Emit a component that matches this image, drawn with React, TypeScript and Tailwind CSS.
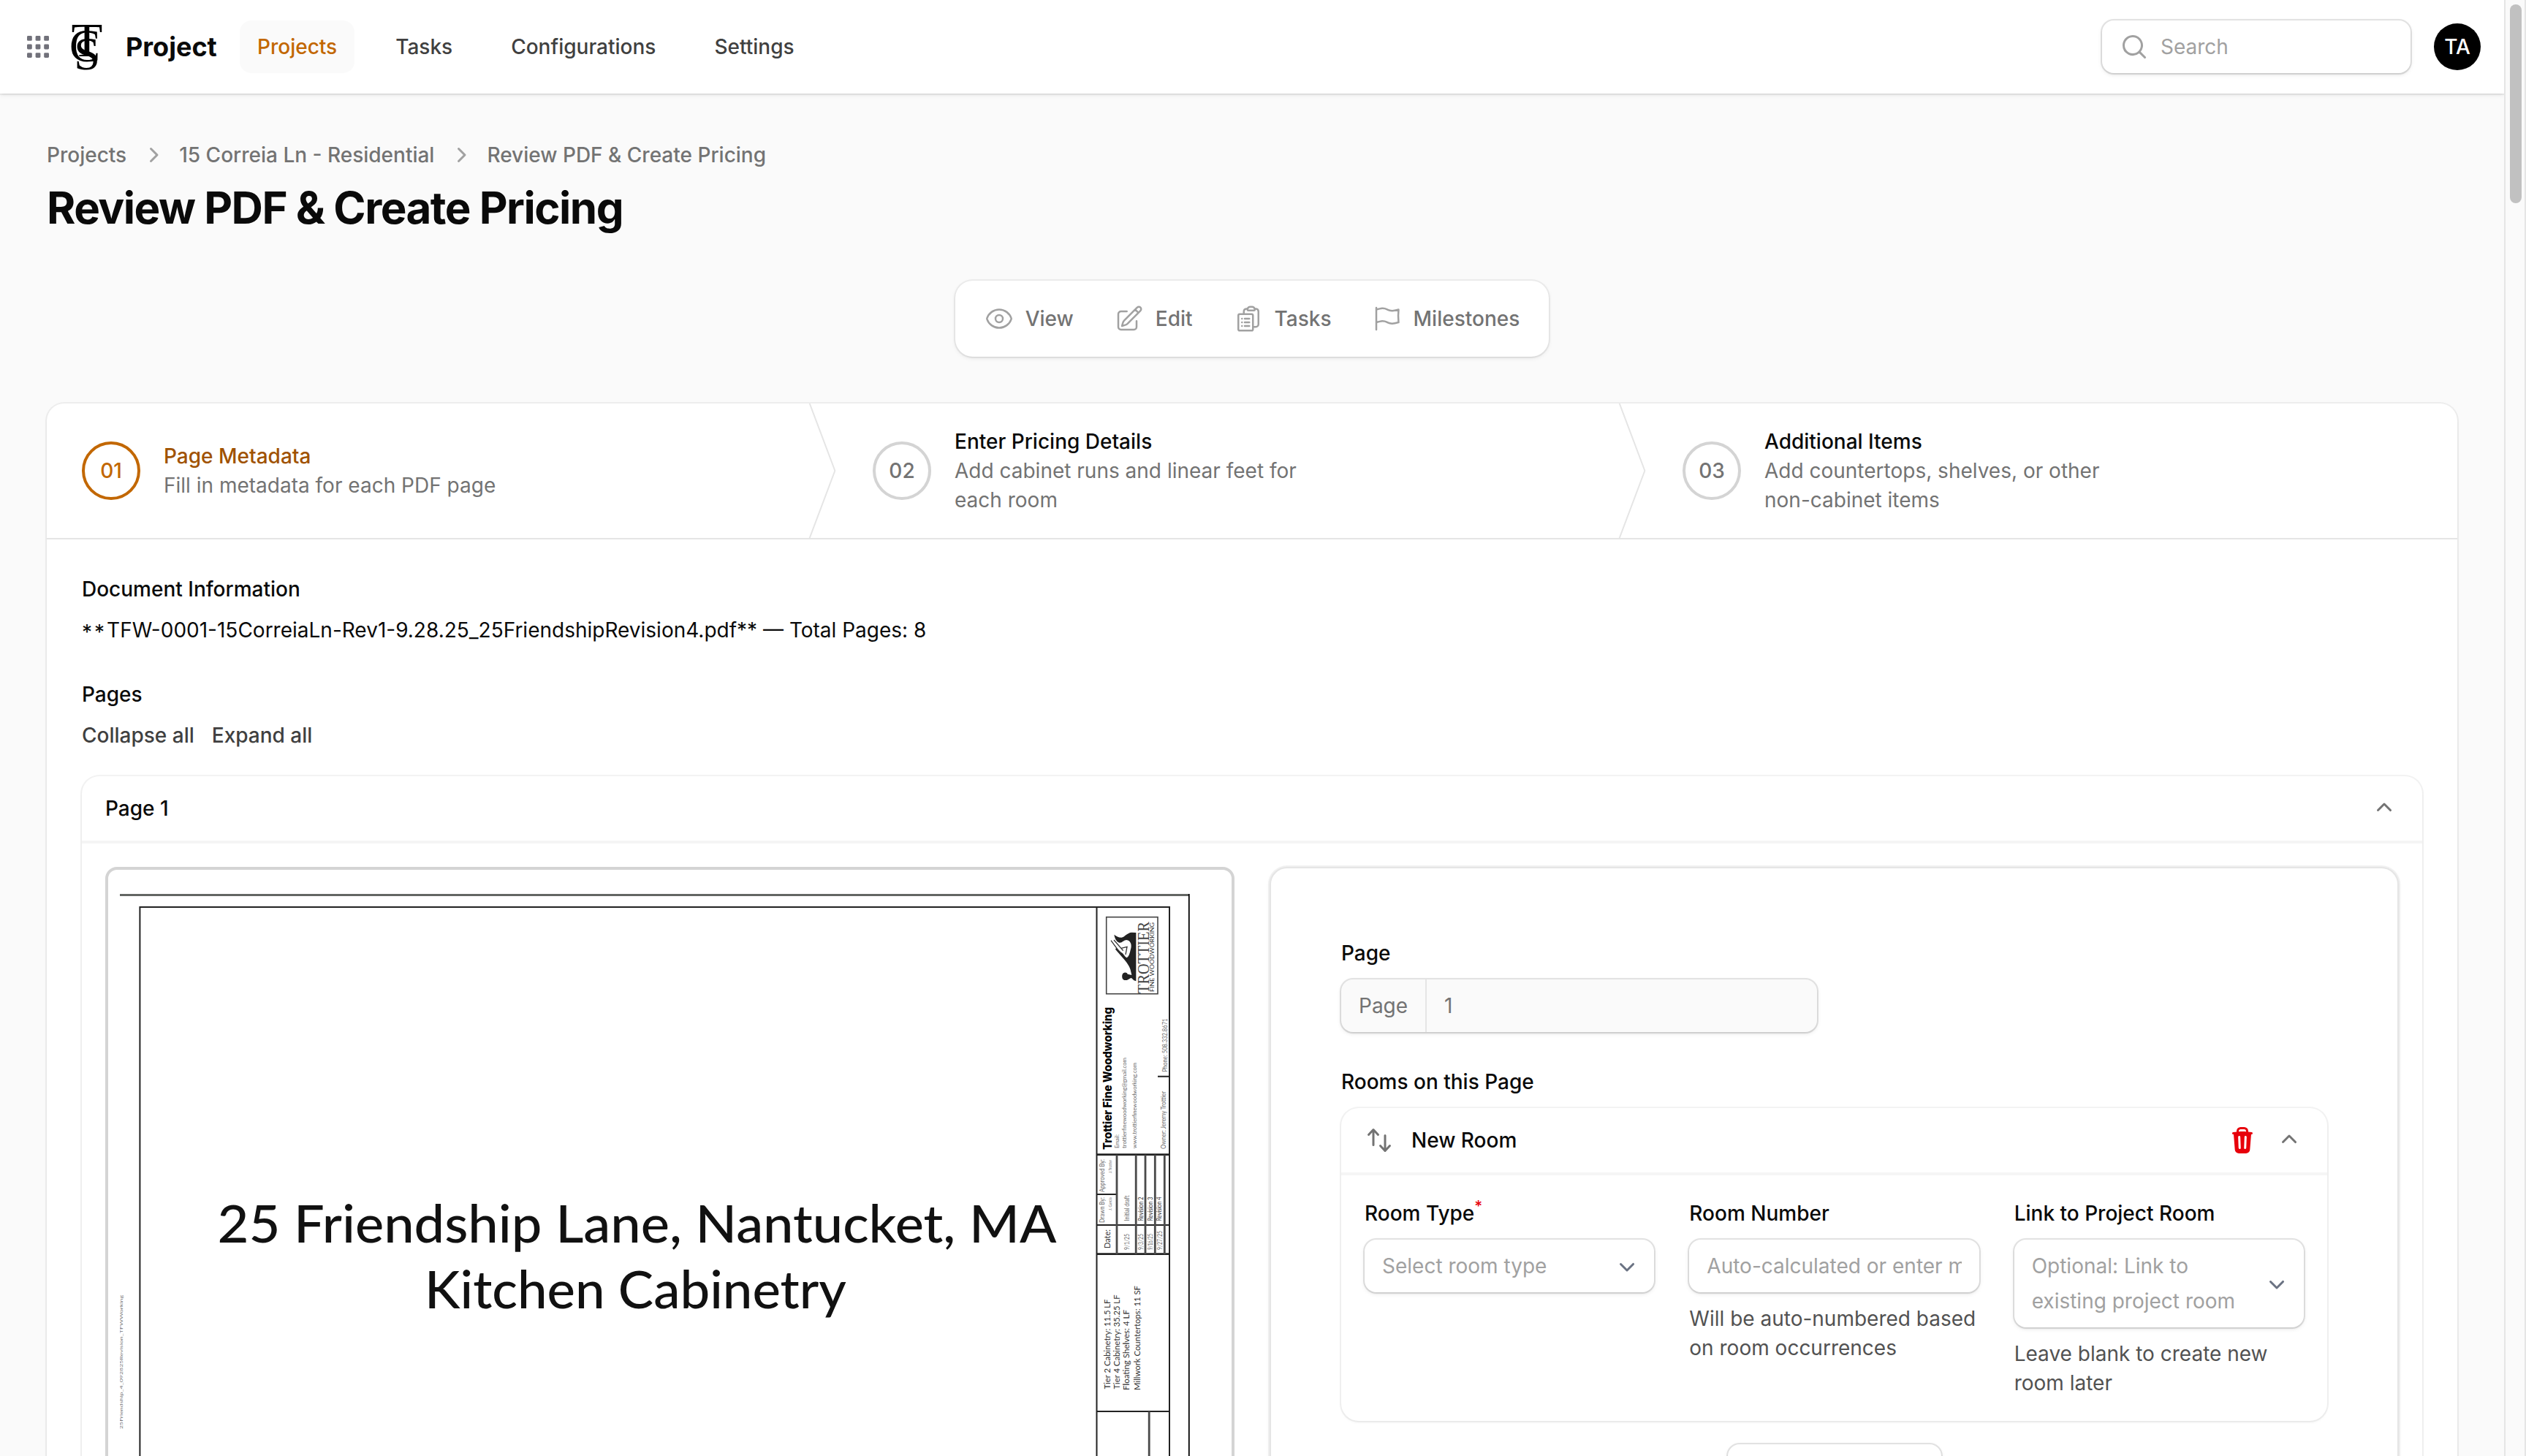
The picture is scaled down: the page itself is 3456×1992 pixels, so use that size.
import React from "react";
import {
  HiMiniArrowsUpDown,
  HiMiniChevronDown,
  HiMiniChevronRight,
  HiMiniChevronUp,
  HiMiniMagnifyingGlass,
  HiMiniTrash,
  HiOutlineClipboardDocumentList,
  HiOutlineEye,
  HiOutlineFlag,
  HiOutlinePencilSquare,
} from "react-icons/hi2";

const SURFACE =
  "shadow-[0_0_0_2px_rgba(10,10,10,0.05),0_2px_6px_rgba(0,0,0,0.08),0_2px_4px_-2px_rgba(0,0,0,0.08)]";
const CARD = "shadow-[0_0_0_2px_rgba(10,10,10,0.05),0_2px_4px_rgba(0,0,0,0.05)]";
const FIELD =
  "rounded-[16px] shadow-[0_0_0_2px_rgba(10,10,10,0.1),0_2px_6px_rgba(0,0,0,0.1),0_2px_4px_-2px_rgba(0,0,0,0.1)]";

function Monogram() {
  return (
    <svg width="48" height="64" viewBox="0 0 48 64" className="ml-[26px] overflow-visible">
      <g fontFamily="Liberation Serif, serif" fill="#000" textAnchor="middle">
        <text transform="translate(25 44.6) scale(1.08 1)" fontSize="65">T</text>
        <text x="22" y="52" fontSize="63">C</text>
        <text x="25" y="63" fontSize="64">S</text>
      </g>
    </svg>
  );
}

function Header() {
  const items = ["Projects", "Tasks", "Configurations", "Settings"];
  return (
    <header className={`relative flex h-32 items-center bg-white pr-8 pl-9 ${SURFACE}`}>
      <svg width="32" height="32" viewBox="0 0 32 32" fill="#71717a">
        {[1, 12.6, 24.2].map((y) =>
          [1, 12.6, 24.2].map((x) => (
            <rect key={`${x}-${y}`} x={x} y={y} width="6.8" height="6.8" rx="1.4" />
          ))
        )}
      </svg>
      <Monogram />
      <span className="ml-[30px] w-[125px] text-[36px] leading-10 font-bold whitespace-nowrap text-neutral-950">
        Project
      </span>
      <nav className="ml-[31px] flex items-center gap-8">
        {items.map((t, i) => (
          <span
            key={t}
            className={
              i === 0
                ? "rounded-[16px] bg-neutral-50 px-6 py-4 text-[#c26700]"
                : "px-6 py-4 text-neutral-700"
            }
          >
            {t}
          </span>
        ))}
      </nav>
      <div className={`ml-auto flex h-[72px] w-[422px] items-center bg-white pl-6 ${FIELD}`}>
        <HiMiniMagnifyingGlass className="size-10 text-neutral-400" />
        <span className="ml-4 font-normal text-neutral-400">Search</span>
      </div>
      <span className="ml-8 flex size-16 items-center justify-center rounded-full bg-black text-white">TA</span>
    </header>
  );
}

const TABS = [
  { icon: HiOutlineEye, label: "View" },
  { icon: HiOutlinePencilSquare, label: "Edit" },
  { icon: HiOutlineClipboardDocumentList, label: "Tasks" },
  { icon: HiOutlineFlag, label: "Milestones" },
];

function StepDivider() {
  return (
    <svg
      className="absolute top-0 right-0 h-full w-10 text-neutral-200"
      viewBox="0 0 22 80"
      preserveAspectRatio="none"
      fill="none"
    >
      <path d="M0 -2L20 40L0 82" stroke="currentColor" strokeWidth="2" strokeLinejoin="round" vectorEffect="non-scaling-stroke" />
    </svg>
  );
}

const STEPS = [
  { title: "Page Metadata", text: "Fill in metadata for each PDF page" },
  { title: "Enter Pricing Details", text: "Add cabinet runs and linear feet for each room" },
  { title: "Additional Items", text: "Add countertops, shelves, or other non-cabinet items" },
];

function Stepper() {
  return (
    <div className="grid grid-cols-[1082px_1108px_1108px] border-b-2 border-neutral-200">
      {STEPS.map((s, i) => (
        <div key={s.title} className="relative flex h-[184px] items-center gap-8 px-12">
          <span
            className={
              i === 0
                ? "flex size-20 items-center justify-center rounded-full border-4 border-[#c26700] text-[#c26700]"
                : "flex size-20 items-center justify-center rounded-full border-4 border-neutral-300 text-neutral-500"
            }
          >
            {`0${i + 1}`}
          </span>
          <div className="w-[480px]">
            <div className={i === 0 ? "text-[#a05200]" : "text-neutral-950"}>{s.title}</div>
            <div className="font-normal text-neutral-500">{s.text}</div>
          </div>
          {i < 2 && <StepDivider />}
        </div>
      ))}
    </div>
  );
}

type NoteProps = {
  x: number;
  y: number;
  len: number;
  size: number;
  fill?: string;
  font?: string;
  weight?: number;
  children: string;
};

/* A line of title block lettering that reads from bottom to top. */
function Note({ x, y, len, size, fill = "#6b6b6b", font = "Lato, sans-serif", weight = 400, children }: NoteProps) {
  return (
    <text
      transform={`translate(${x} ${y}) rotate(-90)`}
      fontSize={size}
      fontFamily={font}
      fontWeight={weight}
      fill={fill}
      textLength={len}
      lengthAdjust="spacingAndGlyphs"
    >
      {children}
    </text>
  );
}

function Drawing() {
  return (
    <svg width="1509" height="798" viewBox="164 1194 1509 798" className="block">
      <g fill="none" stroke="#222" strokeWidth="2">
        <path d="M164 1224.4H1627" stroke="#636663" strokeWidth="3" />
        <path d="M1626.8 1223V2000" strokeWidth="1.8" stroke="#000" />
        <path d="M191.4 2000V1241H1600V2000M1500.5 1241V2000" />
        <path d="M1500 1579.6H1600M1500 1715.6H1600" strokeWidth="2.8" />
        <path d="M1500 1634H1528M1500 1676H1600M1500 1931H1600M1584 1472.8H1600" />
        <path d="M1528 1580V1716M1554.2 1580V1716M1567 1580V1716M1580.3 1580V1716M1593.3 1580V1716M1572.2 1931V2000" stroke="#4a4a4a" strokeWidth="2.8" />
        <rect x="1513.7" y="1254.7" width="70.3" height="105" stroke="#444" strokeWidth="1.6" />
      </g>

      <g transform="translate(1440 1180) scale(0.33333)">
        <path
          fill="#222"
          d="M343 288L325 287C306 288 297 306 283 308C270 308 262 302 253 296C256 312 262 325 274 329C286 331 292 318 304 318C320 320 326 336 322 352C318 366 316 386 304 391C296 386 290 372 282 369L262 350L258 356L282 384C298 402 314 420 320 440L325 462L308 458C306 450 290 448 286 462C284 476 290 484 300 483C312 484 316 474 324 474L334 484L343 487Z"
        />
        <path d="M240 320L280 374M252 318L290 362M282 352L306 346L300 378" fill="none" stroke="#333" strokeWidth="4" />
      </g>

      <g>
        <text x="297.5" y="1699.5" fontSize="71" fontFamily="Lato, sans-serif" fill="#111" textLength="1148" lengthAdjust="spacingAndGlyphs">
          25 Friendship Lane, Nantucket, MA
        </text>
        <text x="581" y="1790" fontSize="71" fontFamily="Lato, sans-serif" fill="#111" textLength="577" lengthAdjust="spacingAndGlyphs">
          Kitchen Cabinetry
        </text>
      </g>

      <Note x={1572} y={1359} len={98} size={23} fill="#444" font="Liberation Serif, serif">TROTTIER</Note>
      <Note x={1578.5} y={1357} len={95} size={7.5} fill="#333">FINE WOODWORKING</Note>
      <Note x={1520.6} y={1573} len={195} size={16} fill="#000" font="Inter, sans-serif" weight={800}>Trottier Fine Woodworking</Note>
      <Note x={1531} y={1571} len={19} size={8}>Email:</Note>
      <Note x={1541} y={1571} len={124} size={8}>trottierfinewoodworking@gmail.com</Note>
      <Note x={1554.5} y={1571} len={117} size={8}>www.trottierfinewoodworking.com</Note>
      <Note x={1595} y={1572} len={79} size={8.5}>Owner: Jeremy Trottier</Note>
      <Note x={1597} y={1466.5} len={73} size={8.5}>Phone: 508.332.8671</Note>

      <Note x={1511} y={1631} len={45} size={8.5}>Approved By:</Note>
      <Note x={1520.5} y={1605} len={18} size={5}>J. Trottier</Note>
      <Note x={1511} y={1673} len={35} size={8.5}>Drawn By:</Note>
      <Note x={1520.5} y={1656} len={18} size={5}>J. Garcia</Note>
      <Note x={1518.5} y={1708} len={26} size={11} fill="#333">Date:</Note>
      <Note x={1545} y={1670.5} len={35} size={8.5}>Initial draft</Note>
      <Note x={1563.5} y={1670.5} len={33} size={8.5} fill="#333">Revision 2</Note>
      <Note x={1577} y={1670.5} len={33} size={8.5} fill="#333">Revision 3</Note>
      <Note x={1588.5} y={1670.5} len={33} size={8.5} fill="#333">Revision 4</Note>
      <Note x={1545} y={1710} len={22} size={8.5}>9/1/25</Note>
      <Note x={1563.5} y={1710} len={22} size={8.5}>9/3/25</Note>
      <Note x={1577} y={1710} len={22} size={8.5}>9/16/25</Note>
      <Note x={1590} y={1710} len={26} size={8.5}>9/27/25</Note>

      <Note x={1518.5} y={1900.5} len={123} size={12} fill="#333">Tier 2 Cabinetry: 11.5 LF</Note>
      <Note x={1531.5} y={1900.5} len={129} size={12} fill="#333">Tier 4 Cabinetry: 35.25 LF</Note>
      <Note x={1545} y={1902} len={110} size={12} fill="#333">Floating Shelves: 4 LF</Note>
      <Note x={1560} y={1902} len={143} size={12} fill="#333">Millwork Countertops: 11 SF</Note>

      <Note x={167.5} y={1955} len={183} size={6} fill="#777">25Friendship_4_092825Revision_TFWWorking</Note>
    </svg>
  );
}

function RoomCard() {
  return (
    <div className={`mt-4 rounded-3xl bg-white ${CARD}`}>
      <div className="flex h-[88px] items-center px-8">
        <HiMiniArrowsUpDown className="size-10 text-neutral-500" />
        <span className="ml-6">New Room</span>
        <HiMiniTrash className="ml-auto size-10 text-[#e7000b]" />
        <HiMiniChevronUp className="ml-6 size-10 text-neutral-500" />
      </div>
      <div className="grid grid-cols-3 gap-12 border-t-4 border-neutral-100 p-8">
        <div>
          <div className="relative w-fit">
            Room Type
            <span className="absolute top-[-9px] left-full text-[21px] text-[#e7000b]">*</span>
          </div>
          <div className={`mt-4 flex h-[72px] items-center justify-between pr-[17px] pl-6 font-normal text-neutral-400 ${FIELD}`}>
            Select room type
            <HiMiniChevronDown className="size-10 text-gray-500" />
          </div>
        </div>
        <div className="min-w-0">
          <div>Room Number</div>
          <div className={`mt-4 flex h-[72px] items-center px-6 font-normal text-neutral-400 ${FIELD}`}>
            <span className="overflow-hidden whitespace-nowrap">Auto-calculated or enter manually</span>
          </div>
          <p className="mt-4 font-normal text-neutral-600">Will be auto-numbered based on room occurrences</p>
        </div>
        <div>
          <div>Link to Project Room</div>
          <div className={`mt-4 flex h-[120px] items-center justify-between pr-[17px] pl-6 leading-12 font-normal text-neutral-400 ${FIELD}`}>
            <span className="w-[290px]">Optional: Link to existing project room</span>
            <HiMiniChevronDown className="size-10 text-gray-500" />
          </div>
          <p className="mt-4 font-normal text-neutral-600">Leave blank to create new room later</p>
        </div>
      </div>
    </div>
  );
}

function PageForm() {
  return (
    <div className="h-[1200px] rounded-3xl border-2 border-neutral-200 bg-white px-24 pt-24 shadow-[0_0_0_2px_rgba(10,10,10,0.05),0_2px_6px_rgba(0,0,0,0.06)]">
      <div>Page</div>
      <div className={`mt-4 flex h-[72px] w-[651px] items-center bg-neutral-50 font-normal text-neutral-500 ${FIELD}`}>
        <span className="flex h-full w-[117px] items-center border-r-2 border-neutral-200 pl-6">Page</span>
        <span className="pl-6">1</span>
      </div>
      <div className="mt-12">Rooms on this Page</div>
      <RoomCard />
      <button
        type="button"
        className={`mx-auto mt-8 block h-[72px] w-[292px] bg-white ${FIELD}`}
      />
    </div>
  );
}

export default function App() {
  return (
    <div className="flex h-[1992px] w-[3456px] overflow-hidden bg-neutral-50 font-['Inter',sans-serif] text-[28px] leading-10 font-medium text-neutral-950">
      <div className="h-full w-[3426px] overflow-hidden">
        <Header />
        <main className="flex flex-col px-16 pt-16">
          <div className="flex items-center gap-4 text-neutral-500">
            <span>Projects</span>
            <HiMiniChevronRight className="size-10 text-neutral-400" />
            <span>15 Correia Ln - Residential</span>
            <HiMiniChevronRight className="size-10 text-neutral-400" />
            <span>Review PDF &amp; Create Pricing</span>
          </div>
          <h1 className="mt-4 text-[60px] leading-[72px] font-bold tracking-tight">Review PDF &amp; Create Pricing</h1>

          <nav className={`mt-16 flex gap-2 self-center rounded-3xl bg-white p-4 ${SURFACE}`}>
            {TABS.map(({ icon: Icon, label }) => (
              <span key={label} className="flex h-[72px] items-center gap-4 px-6 text-neutral-500">
                <Icon className="size-10 text-neutral-400" />
                {label}
              </span>
            ))}
          </nav>

          <section className={`mt-16 rounded-3xl bg-white ${CARD}`}>
            <Stepper />
            <div className="p-12">
              <div>Document Information</div>
              <p className="mt-4 font-normal">
                <span className="relative top-[3px] tracking-[3px]">**</span>
                TFW-0001-15CorreiaLn-Rev1-9.28.25_25FriendshipRevision4.pdf** — Total Pages: 8
              </p>
              <div className="mt-12">Pages</div>
              <div className="mt-4 flex gap-6 text-neutral-700">
                <span>Collapse all</span>
                <span>Expand all</span>
              </div>

              <div className={`mt-9 rounded-3xl bg-white ${CARD}`}>
                <div className="flex h-[88px] items-center justify-between px-8">
                  <span>Page 1</span>
                  <HiMiniChevronUp className="size-10 text-neutral-500" />
                </div>
                <div className="grid grid-cols-2 items-start gap-12 border-t-4 border-neutral-100 p-8">
                  <div className="h-[1200px] rounded-[16px] border-4 border-neutral-300 pt-1 pl-4">
                    <Drawing />
                  </div>
                  <PageForm />
                </div>
              </div>
            </div>
          </section>
        </main>
      </div>
      <div className="h-full w-[30px] border-x-2 border-x-neutral-200 bg-neutral-50 pt-1.5 pl-1.5">
        <div className="h-[272px] w-4 rounded-full bg-[#c1c1c1]" />
      </div>
    </div>
  );
}
